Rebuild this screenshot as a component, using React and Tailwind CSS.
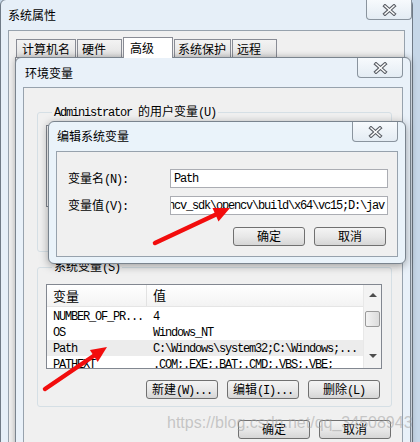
import React from "react";

const cjk = "font-['Noto_Sans_CJK_SC',sans-serif] text-[12px] leading-[14px]";
const mono = "font-['Liberation_Mono',monospace] text-[12px] leading-[14px] tracking-[-1.2px]";

// simsun-ish text: latin as monospace, han as cjk
function Sim({ text, className = "" }) {
  const parts = text.split(/([\u4e00-\u9fff]+)/).filter(Boolean);
  return (
    <span className={"whitespace-pre text-[11px] leading-[14px] text-black " + className}>
      {parts.map((p, i) =>
        /[\u4e00-\u9fff]/.test(p) ? (
          <span key={i} className={cjk}>{p}</span>
        ) : (
          <span key={i} className={mono}>{p}</span>
        )
      )}
    </span>
  );
}

function CloseButton() {
  return (
    <div className="flex h-[20px] w-[46px] shrink-0 items-center justify-center rounded-b-[4px] border border-t-0 border-[#8a949e] bg-linear-to-b from-[#f7fafd] to-[#e4ecf3]">
      <svg width="15" height="12" viewBox="0 0 15 12">
        <path d="M3 2 L12 10 M12 2 L3 10" stroke="#5b5f66" strokeWidth="3.6" strokeLinecap="square" />
        <path d="M3 2 L12 10 M12 2 L3 10" stroke="#ffffff" strokeWidth="1.4" strokeLinecap="square" />
      </svg>
    </div>
  );
}

function Button({ label, className = "" }) {
  return (
    <div
      className={
        "flex h-[19px] w-[72px] items-center justify-center rounded-[3px] border border-[#707070] bg-linear-to-b from-[#f4f4f4] via-[#e8e8e8] to-[#d6d6d6] leading-[14px] " +
        className
      }
    >
      <Sim text={label} />
    </div>
  );
}

function Tab({ label, w, pl, active }) {
  return (
    <div
      className={
        "flex items-center border border-b-0 border-[#898c95] leading-[14px] " +
        (active ? "h-[21px] bg-white -mb-px z-10" : "h-[18px] bg-linear-to-b from-[#f3f3f3] to-[#e2e2e2]") +
        " " + w + " " + pl
      }
    >
      <span className={cjk + " text-black"}>{label}</span>
    </div>
  );
}

const rows = [
  ["NUMBER_OF_PR...", "4"],
  ["OS", "Windows_NT"],
  ["Path", "C:\\Windows\\system32;C:\\Windows;..."],
  ["PATHEXT", ".COM;.EXE;.BAT;.CMD;.VBS;.VBE;"],
];

export default function App() {
  return (
    <div className="relative h-[442px] w-[420px] overflow-hidden bg-[#c6d7e8] text-[12px] leading-[14px]">
      {/* 系统属性 */}
      <div className="absolute left-0 top-[-1px] flex h-[470px] w-[413px] flex-col rounded-t-[6px] border border-[#6f7a86] bg-[#e6eff8]">
        <div className="flex h-[30px] shrink-0 justify-between pl-[7px] pr-0">
          <span className={cjk + " mt-[8px] text-black"}>系统属性</span>
          <CloseButton />
        </div>
        <div className="mx-[7px] flex-1 border border-[#97a2ad] bg-[#f0f0f0]">
          <div className="mt-[5px] flex h-[21px] items-end gap-px pl-[7px]">
            <Tab label="计算机名" w="w-[60px]" pl="pl-[5px]" />
            <Tab label="硬件" w="w-[45px]" pl="pl-[4px]" />
            <Tab label="高级" w="w-[50px]" pl="pl-[6px]" active />
            <Tab label="系统保护" w="w-[57px]" pl="pl-[3px]" />
            <Tab label="远程" w="w-[45px]" pl="pl-[4px]" />
          </div>
          <div className="ml-[6px] h-[400px] border border-[#898c95] bg-white" />
        </div>
      </div>

      {/* 环境变量 */}
      <div className="absolute left-[15px] top-[57px] flex h-[420px] w-[396px] flex-col rounded-t-[6px] border border-[#7a848e] bg-[#e9f1f9] shadow-[0_0_6px_rgba(0,0,0,0.3)]">
        <div className="flex h-[29px] shrink-0 justify-between pl-[9px] pr-[7px]">
          <span className={cjk + " mt-[8px] text-black"}>环境变量</span>
          <CloseButton />
        </div>
        <div className="mx-[7px] flex flex-1 flex-col border border-[#97a2ad] bg-[#f0f0f0]">
          <fieldset className="ml-[13px] mt-[16px] h-[148px] w-[355px] rounded-[3px] border border-[#d5dfe5] px-[8px] pt-[5px]">
            <legend className="ml-[6px] px-[2px] text-[12px] leading-[14px]">
              <Sim text="Administrator 的用户变量(U)" />
            </legend>
            <div className="h-[82px] w-[336px] border border-[#828790] bg-white" />
          </fieldset>

          <fieldset className="ml-[13px] mt-[7px] h-[148px] w-[355px] rounded-[3px] border border-[#d5dfe5] px-[8px] pt-[9px]">
            <legend className="ml-[6px] px-[2px] text-[12px] leading-[14px]">
              <Sim text="系统变量(S)" />
            </legend>
            <div className="flex h-[85px] w-[336px] border border-[#828790] bg-white">
              <div className="flex w-[316px] flex-col overflow-hidden">
                <div className="flex h-[22px] shrink-0 items-center border-b border-[#e5e5e5] bg-linear-to-b from-white to-[#f3f3f3]">
                  <div className="flex h-full w-[100px] items-center border-r border-[#e2e2e2] pl-[6px]">
                    <span className={cjk + " text-[13px] text-black"}>变量</span>
                  </div>
                  <div className="pl-[6px]">
                    <span className={cjk + " text-[13px] text-black"}>值</span>
                  </div>
                </div>
                <div className="pt-[1px]">
                  {rows.map(([k, v]) => (
                    <div
                      key={k}
                      className={"flex h-[16px] items-center " + (k === "Path" ? "bg-[#ececec]" : "")}
                    >
                      <div className="flex w-[100px] pl-[6px]">
                        <Sim text={k} />
                      </div>
                      <div className="flex pl-[6px]">
                        <Sim text={v} />
                      </div>
                    </div>
                  ))}
                </div>
              </div>
              <div className="flex w-[18px] flex-col items-center border-l border-[#e8e8e8] bg-[#f3f3f3]">
                <svg className="mt-[7px]" width="8" height="5" viewBox="0 0 8 5">
                  <path d="M0 5 L4 1 L8 5 Z" fill="#4d4d4d" />
                </svg>
                <div className="mt-[14px] h-[16px] w-[15px] rounded-[2px] border border-[#9a9a9a] bg-linear-to-r from-[#f3f3f3] to-[#dcdcdc]" />
                <svg className="mt-[27px]" width="8" height="5" viewBox="0 0 8 5">
                  <path d="M0 0 L8 0 L4 4 Z" fill="#4d4d4d" />
                </svg>
              </div>
            </div>
            <div className="mt-[11px] flex w-[336px] justify-end gap-[9px] pr-[2px]">
              <Button label="新建(W)..." className="w-[71px]" />
              <Button label="编辑(I)..." />
              <Button label="删除(L)" />
            </div>
          </fieldset>

          <div className="ml-[214px] mt-[13px] flex gap-[9px]">
            <Button label="确定" />
            <Button label="取消" />
          </div>
        </div>
      </div>

      {/* 编辑系统变量 */}
      <div className="absolute left-[48px] top-[121px] flex h-[143px] w-[358px] flex-col rounded-[6px] border border-[#7a848e] bg-[#eaf3fa] shadow-[0_2px_8px_rgba(0,0,0,0.35)]">
        <div className="flex h-[29px] shrink-0 justify-between pl-[8px] pr-[7px]">
          <span className={cjk + " mt-[7px] text-black"}>编辑系统变量</span>
          <CloseButton />
        </div>
        <div className="mx-[7px] mb-[6px] flex flex-1 flex-col border border-[#97a2ad] bg-[#f0f0f0] pl-[11px]">
          <div className="mt-[17px] flex h-[19px] items-center">
            <div className="flex w-[102px]">
              <Sim text="变量名(N):" />
            </div>
            <div className="flex h-[19px] w-[218px] items-center border border-[#abadb3] bg-white pl-[3px]">
              <Sim text="Path" />
            </div>
          </div>
          <div className="mt-[8px] flex h-[19px] items-center">
            <div className="flex w-[102px]">
              <Sim text="变量值(V):" />
            </div>
            <div className="flex h-[19px] w-[218px] items-center overflow-hidden border border-[#abadb3] bg-white">
              <Sim text="ncv_sdk\opencv\build\x64\vc15;D:\jav" className="-ml-[3px] shrink-0" />
            </div>
          </div>
          <div className="ml-[165px] mt-[12px] flex gap-[9px]">
            <Button label="确定" />
            <Button label="取消" />
          </div>
        </div>
      </div>

      {/* watermark */}
      <div className="absolute left-[167px] top-[414px] font-['Liberation_Sans',sans-serif] text-[16px] leading-[18px] text-[#a0a0a0]/55">
        https://blog.csdn.net/qq_34508943
      </div>

      {/* arrows */}
      <svg className="pointer-events-none absolute left-0 top-0" width="420" height="442">
        <line x1="155" y1="243" x2="217" y2="214" stroke="#f20d0d" strokeWidth="4.5" strokeLinecap="round" />
        <polygon points="230,208 218.5,221.5 212.5,208" fill="#f20d0d" />
        <line x1="45" y1="389" x2="95" y2="355" stroke="#f20d0d" strokeWidth="4.5" strokeLinecap="round" />
        <polygon points="107,347 97.7,362 89.9,350" fill="#f20d0d" />
      </svg>
    </div>
  );
}
